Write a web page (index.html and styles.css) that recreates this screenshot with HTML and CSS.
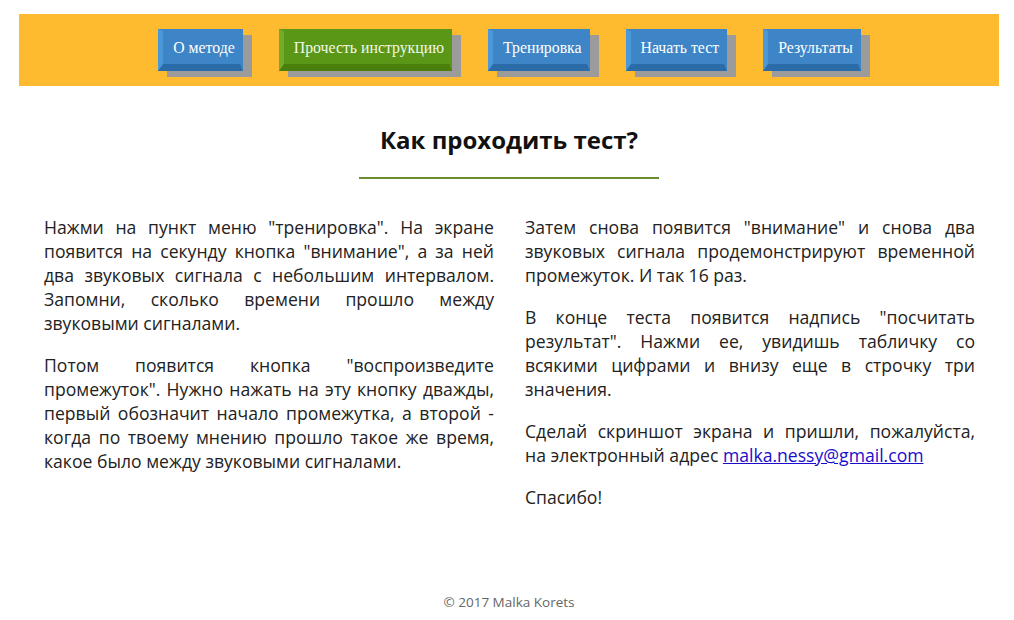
FILE: index.html
```html
<!DOCTYPE html>
<html lang="ru">
<head>
<meta charset="utf-8">
<title>Как проходить тест?</title>
<link rel="stylesheet" href="styles.css">
</head>
<body>
<div class="page">
  <header class="topbar">
    <nav class="menu">
      <a class="btn" href="#">О методе</a>
      <a class="btn btn-active" href="#">Прочесть инструкцию</a>
      <a class="btn" href="#">Тренировка</a>
      <a class="btn" href="#">Начать тест</a>
      <a class="btn" href="#">Результаты</a>
    </nav>
  </header>
  <main class="content">
    <h1 class="title">Как проходить тест?</h1>
    <div class="rule"></div>
    <div class="columns">
      <div class="col">
        <p>Нажми на пункт меню "тренировка". На экране появится на секунду кнопка "внимание", а за ней два звуковых сигнала с небольшим интервалом. Запомни, сколько времени прошло между звуковыми сигналами.</p>
        <p>Потом появится кнопка "воспроизведите промежуток". Нужно нажать на эту кнопку дважды, первый обозначит начало промежутка, а второй - когда по твоему мнению прошло такое же время, какое было между звуковыми сигналами.</p>
      </div>
      <div class="col">
        <p>Затем снова появится "внимание" и снова два звуковых сигнала продемонстрируют временной промежуток. И так 16 раз.</p>
        <p>В конце теста появится надпись "посчитать результат". Нажми ее, увидишь табличку со всякими цифрами и внизу еще в строчку три значения.</p>
        <p>Сделай скриншот экрана и пришли, пожалуйста, на&nbsp;электронный адрес <a class="mail" href="#">malka.nessy@gmail.com</a></p>
        <p>Спасибо!</p>
      </div>
    </div>
  </main>
  <footer class="footer">© 2017 Malka Korets</footer>
</div>
</body>
</html>
```

FILE: styles.css
```css
html, body {
  margin: 0;
  padding: 0;
  background: #ffffff;
}

body {
  font-family: "Open Sans", "DejaVu Sans", sans-serif;
  color: #222222;
}

.page {
  width: 980px;
  margin: 14px 0 0 19px;
}

.topbar {
  background: #febb30;
  height: 72px;
  display: flex;
  justify-content: center;
  align-items: flex-start;
}

.menu {
  display: flex;
  gap: 36px;
  padding-top: 15px;
  padding-left: 1px;
}

.btn {
  display: flex;
  align-items: center;
  box-sizing: border-box;
  height: 42px;
  padding: 0 5px 0 10px;
  border-style: solid;
  border-width: 2px 3px 7px 5px;
  border-color: #3d85c6 #3d85c6 #2b6ca8 #4b98d8;
  background: #3d85c6;
  box-shadow: 9px 6px 0 #9b9b9b;
  color: #ffffff;
  font-family: "Liberation Serif", "Times New Roman", serif;
  font-size: 15.8px;
  text-decoration: none;
  white-space: nowrap;
}

.btn-active {
  background: #5a9717;
  border-color: #5a9717 #5a9717 #4a7f0c #70ad2c;
  color: #f3f7e8;
}

.content {
  display: flex;
  flex-direction: column;
  align-items: center;
}

.title {
  margin: 38px 0 0;
  font-size: 24px;
  line-height: 32px;
  font-weight: 700;
  color: #111111;
}

.rule {
  width: 300px;
  height: 2px;
  background: #6b8c2e;
  margin-top: 21px;
}

.columns {
  align-self: stretch;
  display: flex;
  gap: 31px;
  padding: 0 24px 0 25px;
  margin-top: 26px;
}

.col {
  width: 450px;
}

.col p {
  margin: 10px 0 18px;
  font-size: 17.6px;
  line-height: 24px;
  text-align: justify;
}

.mail {
  color: #1a0dcc;
  text-decoration: underline;
}

.footer {
  margin-top: 66px;
  text-align: center;
  font-size: 13.5px;
  color: #666666;
}
```
